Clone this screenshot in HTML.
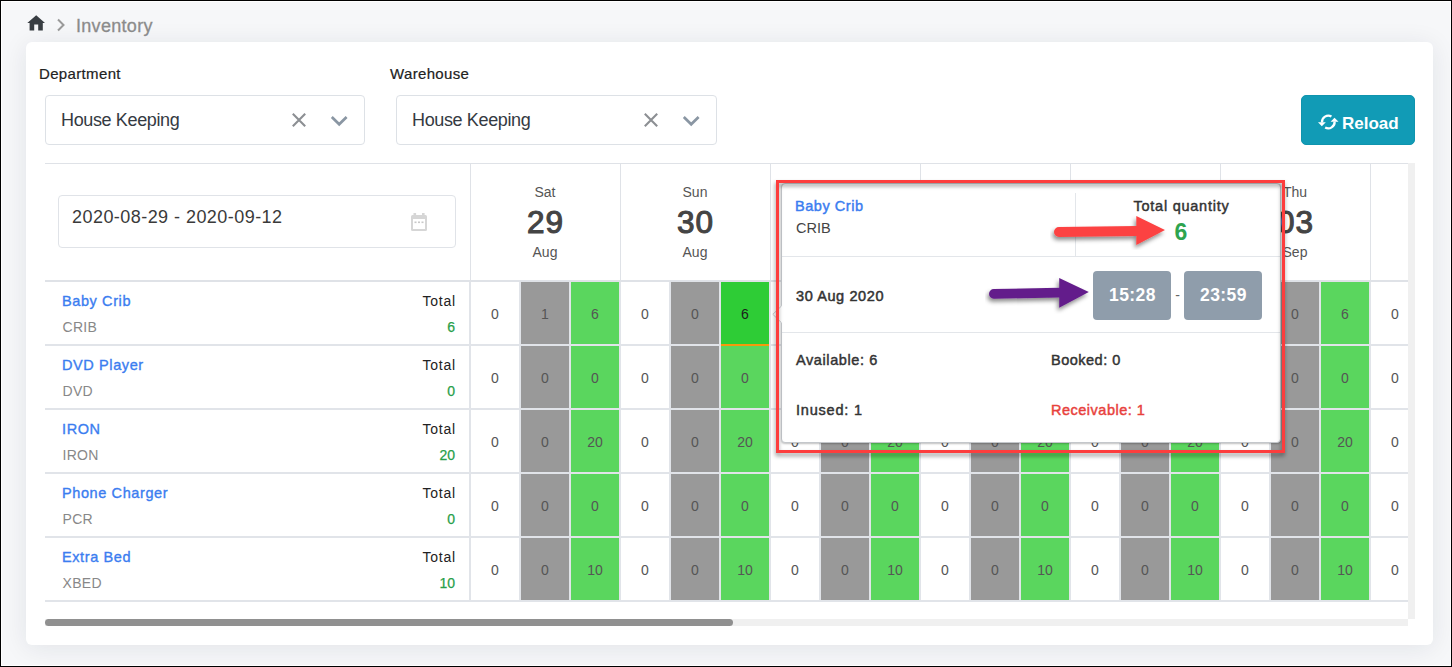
<!DOCTYPE html>
<html><head><meta charset="utf-8"><title>Inventory</title>
<style>
html,body{margin:0;padding:0;}
body{width:1452px;height:667px;position:relative;overflow:hidden;background:#f6f7f9;font-family:"Liberation Sans", sans-serif;}
.t{position:absolute;white-space:nowrap;}
</style></head><body>
<svg style="position:absolute;left:27px;top:15px" width="18" height="16" viewBox="0 0 18 16">
<path d="M9.2 0.3 L18.1 8 L15.8 8 L15.8 15.5 L11.2 15.5 L11.2 9.6 L7.2 9.6 L7.2 15.5 L2.6 15.5 L2.6 8 L0.3 8 Z" fill="#393e43"/></svg>
<svg style="position:absolute;left:56px;top:18px" width="10" height="14" viewBox="0 0 10 14">
<path d="M2 1.5 L7.5 7 L2 12.5" fill="none" stroke="#9a9a9a" stroke-width="2"/></svg>
<div class="t" style="left:76px;top:16.76px;font-size:18px;line-height:18px;color:#8c8c8c;font-weight:normal;-webkit-text-stroke:0.3px #8c8c8c;letter-spacing:0.3px;">Inventory</div>
<div style="position:absolute;left:26px;top:42px;width:1407px;height:603px;background:#fff;border-radius:6px;box-shadow:0 3px 26px rgba(20,30,50,0.09)"></div>
<div class="t" style="left:39px;top:66.30px;font-size:15px;line-height:15px;color:#222;font-weight:normal;-webkit-text-stroke:0.2px #222;letter-spacing:0.35px;">Department</div>
<div class="t" style="left:390px;top:66.30px;font-size:15px;line-height:15px;color:#222;font-weight:normal;-webkit-text-stroke:0.2px #222;letter-spacing:0.35px;">Warehouse</div>
<div style="position:absolute;left:45px;top:95px;width:318px;height:48px;border:1px solid #dde1e6;border-radius:4px;background:#fff"></div>
<div class="t" style="left:61px;top:111.16px;font-size:18px;line-height:18px;color:#343a42;font-weight:normal;letter-spacing:-0.36px;">House Keeping</div>
<svg style="position:absolute;left:291px;top:112px" width="16" height="16" viewBox="0 0 16 16">
<path d="M1.8 1.8 L14.2 14.2 M14.2 1.8 L1.8 14.2" stroke="#8c8f93" stroke-width="2.1" fill="none"/></svg>
<svg style="position:absolute;left:330px;top:114px" width="18" height="14" viewBox="0 0 18 14">
<path d="M1.8 3 L9.2 10.3 L16.6 3" stroke="#8a96a3" stroke-width="2.7" fill="none"/></svg>
<div style="position:absolute;left:396px;top:95px;width:319px;height:48px;border:1px solid #dde1e6;border-radius:4px;background:#fff"></div>
<div class="t" style="left:412px;top:111.16px;font-size:18px;line-height:18px;color:#343a42;font-weight:normal;letter-spacing:-0.36px;">House Keeping</div>
<svg style="position:absolute;left:643px;top:112px" width="16" height="16" viewBox="0 0 16 16">
<path d="M1.8 1.8 L14.2 14.2 M14.2 1.8 L1.8 14.2" stroke="#8c8f93" stroke-width="2.1" fill="none"/></svg>
<svg style="position:absolute;left:682px;top:114px" width="18" height="14" viewBox="0 0 18 14">
<path d="M1.8 3 L9.2 10.3 L16.6 3" stroke="#8a96a3" stroke-width="2.7" fill="none"/></svg>
<div style="position:absolute;left:1301px;top:95px;width:112px;height:48px;background:#119bb6;border:1px solid #0f94ae;border-radius:5px"></div>
<svg style="position:absolute;left:1314px;top:110px" width="28" height="24" viewBox="0 0 28 24">
<path d="M17.45 6.54 A6.3 6.3 0 0 0 8 12.4" stroke="#fff" stroke-width="2.3" fill="none"/>
<path d="M11.15 17.46 A6.3 6.3 0 0 0 20.6 11.6" stroke="#fff" stroke-width="2.3" fill="none"/>
<path d="M4 12.3 L11.8 12.3 L7.8 16.2 Z" fill="#fff"/>
<path d="M16.6 11.7 L24.5 11.7 L20.5 7.8 Z" fill="#fff"/>
</svg>
<div class="t" style="left:1342px;top:114.61px;font-size:17px;line-height:17px;color:#fff;font-weight:bold;">Reload</div>
<div style="position:absolute;left:0;top:0;width:1408px;height:619px;overflow:hidden">
<div style="position:absolute;left:45px;top:163px;width:1363px;height:1px;background:#dfe2e7"></div>
<div style="position:absolute;left:45px;top:280px;width:1363px;height:2px;background:#dfe2e7"></div>
<div style="position:absolute;left:470px;top:164px;width:1px;height:116px;background:#dfe2e7"></div>
<div style="position:absolute;left:620px;top:164px;width:1px;height:116px;background:#dfe2e7"></div>
<div style="position:absolute;left:770px;top:164px;width:1px;height:116px;background:#dfe2e7"></div>
<div style="position:absolute;left:920px;top:164px;width:1px;height:116px;background:#dfe2e7"></div>
<div style="position:absolute;left:1070px;top:164px;width:1px;height:116px;background:#dfe2e7"></div>
<div style="position:absolute;left:1220px;top:164px;width:1px;height:116px;background:#dfe2e7"></div>
<div style="position:absolute;left:1370px;top:164px;width:1px;height:116px;background:#dfe2e7"></div>
<div style="position:absolute;left:58px;top:195px;width:396px;height:51px;border:1px solid #e0e3e8;border-radius:4px"></div>
<div class="t" style="left:72px;top:208.26px;font-size:18px;line-height:18px;color:#3a3a3a;font-weight:normal;letter-spacing:0.45px;">2020-08-29 - 2020-09-12</div>
<svg style="position:absolute;left:410px;top:212px" width="18" height="20" viewBox="0 0 18 20">
<rect x="1" y="3" width="16" height="16" rx="1.5" fill="#d6d6d6"/>
<rect x="3" y="7" width="12" height="10" fill="#fff"/>
<rect x="3.5" y="1" width="2.6" height="3" fill="#d6d6d6"/><rect x="12" y="1" width="2.6" height="3" fill="#d6d6d6"/>
<rect x="4.5" y="9.5" width="2" height="1.6" fill="#c8c8c8"/><rect x="8" y="9.5" width="2" height="1.6" fill="#c8c8c8"/><rect x="11.5" y="9.5" width="2" height="1.6" fill="#c8c8c8"/>
</svg>
<div class="t" style="left:345px;width:400px;text-align:center;top:185.15px;font-size:14px;line-height:14px;color:#555;font-weight:normal;">Sat</div>
<div class="t" style="left:345px;width:400px;text-align:center;top:206.94px;font-size:31.5px;line-height:31.5px;color:#444;font-weight:normal;-webkit-text-stroke:1.1px #444;letter-spacing:1px;text-indent:1px;">29</div>
<div class="t" style="left:345px;width:400px;text-align:center;top:245.15px;font-size:14px;line-height:14px;color:#555;font-weight:normal;">Aug</div>
<div class="t" style="left:495px;width:400px;text-align:center;top:185.15px;font-size:14px;line-height:14px;color:#555;font-weight:normal;">Sun</div>
<div class="t" style="left:495px;width:400px;text-align:center;top:206.94px;font-size:31.5px;line-height:31.5px;color:#444;font-weight:normal;-webkit-text-stroke:1.1px #444;letter-spacing:1px;text-indent:1px;">30</div>
<div class="t" style="left:495px;width:400px;text-align:center;top:245.15px;font-size:14px;line-height:14px;color:#555;font-weight:normal;">Aug</div>
<div class="t" style="left:645px;width:400px;text-align:center;top:185.15px;font-size:14px;line-height:14px;color:#555;font-weight:normal;">Mon</div>
<div class="t" style="left:645px;width:400px;text-align:center;top:206.94px;font-size:31.5px;line-height:31.5px;color:#444;font-weight:normal;-webkit-text-stroke:1.1px #444;letter-spacing:1px;text-indent:1px;">31</div>
<div class="t" style="left:645px;width:400px;text-align:center;top:245.15px;font-size:14px;line-height:14px;color:#555;font-weight:normal;">Aug</div>
<div class="t" style="left:795px;width:400px;text-align:center;top:185.15px;font-size:14px;line-height:14px;color:#555;font-weight:normal;">Tue</div>
<div class="t" style="left:795px;width:400px;text-align:center;top:206.94px;font-size:31.5px;line-height:31.5px;color:#444;font-weight:normal;-webkit-text-stroke:1.1px #444;letter-spacing:1px;text-indent:1px;">01</div>
<div class="t" style="left:795px;width:400px;text-align:center;top:245.15px;font-size:14px;line-height:14px;color:#555;font-weight:normal;">Sep</div>
<div class="t" style="left:945px;width:400px;text-align:center;top:185.15px;font-size:14px;line-height:14px;color:#555;font-weight:normal;">Wed</div>
<div class="t" style="left:945px;width:400px;text-align:center;top:206.94px;font-size:31.5px;line-height:31.5px;color:#444;font-weight:normal;-webkit-text-stroke:1.1px #444;letter-spacing:1px;text-indent:1px;">02</div>
<div class="t" style="left:945px;width:400px;text-align:center;top:245.15px;font-size:14px;line-height:14px;color:#555;font-weight:normal;">Sep</div>
<div class="t" style="left:1095px;width:400px;text-align:center;top:185.15px;font-size:14px;line-height:14px;color:#555;font-weight:normal;">Thu</div>
<div class="t" style="left:1095px;width:400px;text-align:center;top:206.94px;font-size:31.5px;line-height:31.5px;color:#444;font-weight:normal;-webkit-text-stroke:1.1px #444;letter-spacing:1px;text-indent:1px;">03</div>
<div class="t" style="left:1095px;width:400px;text-align:center;top:245.15px;font-size:14px;line-height:14px;color:#555;font-weight:normal;">Sep</div>
<div class="t" style="left:1245px;width:400px;text-align:center;top:185.15px;font-size:14px;line-height:14px;color:#555;font-weight:normal;">Fri</div>
<div class="t" style="left:1245px;width:400px;text-align:center;top:206.94px;font-size:31.5px;line-height:31.5px;color:#444;font-weight:normal;-webkit-text-stroke:1.1px #444;letter-spacing:1px;text-indent:1px;">04</div>
<div class="t" style="left:1245px;width:400px;text-align:center;top:245.15px;font-size:14px;line-height:14px;color:#555;font-weight:normal;">Sep</div>
<div style="position:absolute;left:45px;top:344px;width:1363px;height:2px;background:#e1e4e9"></div>
<div class="t" style="left:62px;top:293.73px;font-size:14.5px;line-height:14.5px;color:#3b7df0;font-weight:normal;-webkit-text-stroke:0.35px #3b7df0;letter-spacing:0.6px;">Baby Crib</div>
<div class="t" style="left:62.5px;top:320.15px;font-size:14px;line-height:14px;color:#888;font-weight:normal;letter-spacing:0.3px;">CRIB</div>
<div class="t" style="left:56px;width:400px;text-align:right;top:294.15px;font-size:14px;line-height:14px;color:#222;font-weight:normal;letter-spacing:0.8px;margin-right:-0.8px;">Total</div>
<div style="position:absolute;left:469px;top:282px;width:1px;height:64px;background:#e1e4e9"></div>
<div class="t" style="left:55px;width:400px;text-align:right;top:320.15px;font-size:14px;line-height:14px;color:#28a04a;font-weight:normal;-webkit-text-stroke:0.25px #28a04a;">6</div>
<div style="position:absolute;left:471px;top:282px;width:48px;height:62px;background:#fff"></div>
<div style="position:absolute;left:470px;top:282px;width:1px;height:62px;background:#e1e4e9"></div>
<div class="t" style="left:295px;width:400px;text-align:center;top:307.15px;font-size:14px;line-height:14px;color:#555;font-weight:normal;">0</div>
<div style="position:absolute;left:521px;top:282px;width:48px;height:62px;background:#999999"></div>
<div style="position:absolute;left:520px;top:282px;width:1px;height:62px;background:#e1e4e9"></div>
<div style="position:absolute;left:519px;top:282px;width:1px;height:62px;background:#e1e4e9"></div>
<div class="t" style="left:345px;width:400px;text-align:center;top:307.15px;font-size:14px;line-height:14px;color:#555;font-weight:normal;">1</div>
<div style="position:absolute;left:571px;top:282px;width:48px;height:62px;background:#5ad65e"></div>
<div style="position:absolute;left:570px;top:282px;width:1px;height:62px;background:#e1e4e9"></div>
<div style="position:absolute;left:569px;top:282px;width:1px;height:62px;background:#e1e4e9"></div>
<div class="t" style="left:395px;width:400px;text-align:center;top:307.15px;font-size:14px;line-height:14px;color:#555;font-weight:normal;">6</div>
<div style="position:absolute;left:621px;top:282px;width:48px;height:62px;background:#fff"></div>
<div style="position:absolute;left:620px;top:282px;width:1px;height:62px;background:#e1e4e9"></div>
<div style="position:absolute;left:619px;top:282px;width:1px;height:62px;background:#e1e4e9"></div>
<div class="t" style="left:445px;width:400px;text-align:center;top:307.15px;font-size:14px;line-height:14px;color:#555;font-weight:normal;">0</div>
<div style="position:absolute;left:671px;top:282px;width:48px;height:62px;background:#999999"></div>
<div style="position:absolute;left:670px;top:282px;width:1px;height:62px;background:#e1e4e9"></div>
<div style="position:absolute;left:669px;top:282px;width:1px;height:62px;background:#e1e4e9"></div>
<div class="t" style="left:495px;width:400px;text-align:center;top:307.15px;font-size:14px;line-height:14px;color:#555;font-weight:normal;">0</div>
<div style="position:absolute;left:721px;top:282px;width:48px;height:62px;background:#2ecc36"></div>
<div style="position:absolute;left:720px;top:282px;width:1px;height:62px;background:#e1e4e9"></div>
<div style="position:absolute;left:719px;top:282px;width:1px;height:62px;background:#e1e4e9"></div>
<div class="t" style="left:545px;width:400px;text-align:center;top:307.15px;font-size:14px;line-height:14px;color:#1c1c1c;font-weight:normal;">6</div>
<div style="position:absolute;left:771px;top:282px;width:48px;height:62px;background:#fff"></div>
<div style="position:absolute;left:770px;top:282px;width:1px;height:62px;background:#e1e4e9"></div>
<div style="position:absolute;left:769px;top:282px;width:1px;height:62px;background:#e1e4e9"></div>
<div class="t" style="left:595px;width:400px;text-align:center;top:307.15px;font-size:14px;line-height:14px;color:#555;font-weight:normal;">0</div>
<div style="position:absolute;left:821px;top:282px;width:48px;height:62px;background:#999999"></div>
<div style="position:absolute;left:820px;top:282px;width:1px;height:62px;background:#e1e4e9"></div>
<div style="position:absolute;left:819px;top:282px;width:1px;height:62px;background:#e1e4e9"></div>
<div class="t" style="left:645px;width:400px;text-align:center;top:307.15px;font-size:14px;line-height:14px;color:#555;font-weight:normal;">0</div>
<div style="position:absolute;left:871px;top:282px;width:48px;height:62px;background:#5ad65e"></div>
<div style="position:absolute;left:870px;top:282px;width:1px;height:62px;background:#e1e4e9"></div>
<div style="position:absolute;left:869px;top:282px;width:1px;height:62px;background:#e1e4e9"></div>
<div class="t" style="left:695px;width:400px;text-align:center;top:307.15px;font-size:14px;line-height:14px;color:#555;font-weight:normal;">6</div>
<div style="position:absolute;left:921px;top:282px;width:48px;height:62px;background:#fff"></div>
<div style="position:absolute;left:920px;top:282px;width:1px;height:62px;background:#e1e4e9"></div>
<div style="position:absolute;left:919px;top:282px;width:1px;height:62px;background:#e1e4e9"></div>
<div class="t" style="left:745px;width:400px;text-align:center;top:307.15px;font-size:14px;line-height:14px;color:#555;font-weight:normal;">0</div>
<div style="position:absolute;left:971px;top:282px;width:48px;height:62px;background:#999999"></div>
<div style="position:absolute;left:970px;top:282px;width:1px;height:62px;background:#e1e4e9"></div>
<div style="position:absolute;left:969px;top:282px;width:1px;height:62px;background:#e1e4e9"></div>
<div class="t" style="left:795px;width:400px;text-align:center;top:307.15px;font-size:14px;line-height:14px;color:#555;font-weight:normal;">0</div>
<div style="position:absolute;left:1021px;top:282px;width:48px;height:62px;background:#5ad65e"></div>
<div style="position:absolute;left:1020px;top:282px;width:1px;height:62px;background:#e1e4e9"></div>
<div style="position:absolute;left:1019px;top:282px;width:1px;height:62px;background:#e1e4e9"></div>
<div class="t" style="left:845px;width:400px;text-align:center;top:307.15px;font-size:14px;line-height:14px;color:#555;font-weight:normal;">6</div>
<div style="position:absolute;left:1071px;top:282px;width:48px;height:62px;background:#fff"></div>
<div style="position:absolute;left:1070px;top:282px;width:1px;height:62px;background:#e1e4e9"></div>
<div style="position:absolute;left:1069px;top:282px;width:1px;height:62px;background:#e1e4e9"></div>
<div class="t" style="left:895px;width:400px;text-align:center;top:307.15px;font-size:14px;line-height:14px;color:#555;font-weight:normal;">0</div>
<div style="position:absolute;left:1121px;top:282px;width:48px;height:62px;background:#999999"></div>
<div style="position:absolute;left:1120px;top:282px;width:1px;height:62px;background:#e1e4e9"></div>
<div style="position:absolute;left:1119px;top:282px;width:1px;height:62px;background:#e1e4e9"></div>
<div class="t" style="left:945px;width:400px;text-align:center;top:307.15px;font-size:14px;line-height:14px;color:#555;font-weight:normal;">0</div>
<div style="position:absolute;left:1171px;top:282px;width:48px;height:62px;background:#5ad65e"></div>
<div style="position:absolute;left:1170px;top:282px;width:1px;height:62px;background:#e1e4e9"></div>
<div style="position:absolute;left:1169px;top:282px;width:1px;height:62px;background:#e1e4e9"></div>
<div class="t" style="left:995px;width:400px;text-align:center;top:307.15px;font-size:14px;line-height:14px;color:#555;font-weight:normal;">6</div>
<div style="position:absolute;left:1221px;top:282px;width:48px;height:62px;background:#fff"></div>
<div style="position:absolute;left:1220px;top:282px;width:1px;height:62px;background:#e1e4e9"></div>
<div style="position:absolute;left:1219px;top:282px;width:1px;height:62px;background:#e1e4e9"></div>
<div class="t" style="left:1045px;width:400px;text-align:center;top:307.15px;font-size:14px;line-height:14px;color:#555;font-weight:normal;">0</div>
<div style="position:absolute;left:1271px;top:282px;width:48px;height:62px;background:#999999"></div>
<div style="position:absolute;left:1270px;top:282px;width:1px;height:62px;background:#e1e4e9"></div>
<div style="position:absolute;left:1269px;top:282px;width:1px;height:62px;background:#e1e4e9"></div>
<div class="t" style="left:1095px;width:400px;text-align:center;top:307.15px;font-size:14px;line-height:14px;color:#555;font-weight:normal;">0</div>
<div style="position:absolute;left:1321px;top:282px;width:48px;height:62px;background:#5ad65e"></div>
<div style="position:absolute;left:1320px;top:282px;width:1px;height:62px;background:#e1e4e9"></div>
<div style="position:absolute;left:1319px;top:282px;width:1px;height:62px;background:#e1e4e9"></div>
<div class="t" style="left:1145px;width:400px;text-align:center;top:307.15px;font-size:14px;line-height:14px;color:#555;font-weight:normal;">6</div>
<div style="position:absolute;left:1371px;top:282px;width:48px;height:62px;background:#fff"></div>
<div style="position:absolute;left:1370px;top:282px;width:1px;height:62px;background:#e1e4e9"></div>
<div style="position:absolute;left:1369px;top:282px;width:1px;height:62px;background:#e1e4e9"></div>
<div class="t" style="left:1195px;width:400px;text-align:center;top:307.15px;font-size:14px;line-height:14px;color:#555;font-weight:normal;">0</div>
<div style="position:absolute;left:1421px;top:282px;width:48px;height:62px;background:#999999"></div>
<div style="position:absolute;left:1420px;top:282px;width:1px;height:62px;background:#e1e4e9"></div>
<div style="position:absolute;left:1419px;top:282px;width:1px;height:62px;background:#e1e4e9"></div>
<div class="t" style="left:1245px;width:400px;text-align:center;top:307.15px;font-size:14px;line-height:14px;color:#555;font-weight:normal;">0</div>
<div style="position:absolute;left:1471px;top:282px;width:48px;height:62px;background:#5ad65e"></div>
<div style="position:absolute;left:1470px;top:282px;width:1px;height:62px;background:#e1e4e9"></div>
<div style="position:absolute;left:1469px;top:282px;width:1px;height:62px;background:#e1e4e9"></div>
<div class="t" style="left:1295px;width:400px;text-align:center;top:307.15px;font-size:14px;line-height:14px;color:#555;font-weight:normal;">6</div>
<div style="position:absolute;left:45px;top:408px;width:1363px;height:2px;background:#e1e4e9"></div>
<div class="t" style="left:62px;top:357.73px;font-size:14.5px;line-height:14.5px;color:#3b7df0;font-weight:normal;-webkit-text-stroke:0.35px #3b7df0;letter-spacing:0.6px;">DVD Player</div>
<div class="t" style="left:62.5px;top:384.15px;font-size:14px;line-height:14px;color:#888;font-weight:normal;letter-spacing:0.3px;">DVD</div>
<div class="t" style="left:56px;width:400px;text-align:right;top:358.15px;font-size:14px;line-height:14px;color:#222;font-weight:normal;letter-spacing:0.8px;margin-right:-0.8px;">Total</div>
<div style="position:absolute;left:469px;top:346px;width:1px;height:64px;background:#e1e4e9"></div>
<div class="t" style="left:55px;width:400px;text-align:right;top:384.15px;font-size:14px;line-height:14px;color:#28a04a;font-weight:normal;-webkit-text-stroke:0.25px #28a04a;">0</div>
<div style="position:absolute;left:471px;top:346px;width:48px;height:62px;background:#fff"></div>
<div style="position:absolute;left:470px;top:346px;width:1px;height:62px;background:#e1e4e9"></div>
<div class="t" style="left:295px;width:400px;text-align:center;top:371.15px;font-size:14px;line-height:14px;color:#555;font-weight:normal;">0</div>
<div style="position:absolute;left:521px;top:346px;width:48px;height:62px;background:#999999"></div>
<div style="position:absolute;left:520px;top:346px;width:1px;height:62px;background:#e1e4e9"></div>
<div style="position:absolute;left:519px;top:346px;width:1px;height:62px;background:#e1e4e9"></div>
<div class="t" style="left:345px;width:400px;text-align:center;top:371.15px;font-size:14px;line-height:14px;color:#555;font-weight:normal;">0</div>
<div style="position:absolute;left:571px;top:346px;width:48px;height:62px;background:#5ad65e"></div>
<div style="position:absolute;left:570px;top:346px;width:1px;height:62px;background:#e1e4e9"></div>
<div style="position:absolute;left:569px;top:346px;width:1px;height:62px;background:#e1e4e9"></div>
<div class="t" style="left:395px;width:400px;text-align:center;top:371.15px;font-size:14px;line-height:14px;color:#555;font-weight:normal;">0</div>
<div style="position:absolute;left:621px;top:346px;width:48px;height:62px;background:#fff"></div>
<div style="position:absolute;left:620px;top:346px;width:1px;height:62px;background:#e1e4e9"></div>
<div style="position:absolute;left:619px;top:346px;width:1px;height:62px;background:#e1e4e9"></div>
<div class="t" style="left:445px;width:400px;text-align:center;top:371.15px;font-size:14px;line-height:14px;color:#555;font-weight:normal;">0</div>
<div style="position:absolute;left:671px;top:346px;width:48px;height:62px;background:#999999"></div>
<div style="position:absolute;left:670px;top:346px;width:1px;height:62px;background:#e1e4e9"></div>
<div style="position:absolute;left:669px;top:346px;width:1px;height:62px;background:#e1e4e9"></div>
<div class="t" style="left:495px;width:400px;text-align:center;top:371.15px;font-size:14px;line-height:14px;color:#555;font-weight:normal;">0</div>
<div style="position:absolute;left:721px;top:346px;width:48px;height:62px;background:#5ad65e"></div>
<div style="position:absolute;left:720px;top:346px;width:1px;height:62px;background:#e1e4e9"></div>
<div style="position:absolute;left:719px;top:346px;width:1px;height:62px;background:#e1e4e9"></div>
<div class="t" style="left:545px;width:400px;text-align:center;top:371.15px;font-size:14px;line-height:14px;color:#555;font-weight:normal;">0</div>
<div style="position:absolute;left:771px;top:346px;width:48px;height:62px;background:#fff"></div>
<div style="position:absolute;left:770px;top:346px;width:1px;height:62px;background:#e1e4e9"></div>
<div style="position:absolute;left:769px;top:346px;width:1px;height:62px;background:#e1e4e9"></div>
<div class="t" style="left:595px;width:400px;text-align:center;top:371.15px;font-size:14px;line-height:14px;color:#555;font-weight:normal;">0</div>
<div style="position:absolute;left:821px;top:346px;width:48px;height:62px;background:#999999"></div>
<div style="position:absolute;left:820px;top:346px;width:1px;height:62px;background:#e1e4e9"></div>
<div style="position:absolute;left:819px;top:346px;width:1px;height:62px;background:#e1e4e9"></div>
<div class="t" style="left:645px;width:400px;text-align:center;top:371.15px;font-size:14px;line-height:14px;color:#555;font-weight:normal;">0</div>
<div style="position:absolute;left:871px;top:346px;width:48px;height:62px;background:#5ad65e"></div>
<div style="position:absolute;left:870px;top:346px;width:1px;height:62px;background:#e1e4e9"></div>
<div style="position:absolute;left:869px;top:346px;width:1px;height:62px;background:#e1e4e9"></div>
<div class="t" style="left:695px;width:400px;text-align:center;top:371.15px;font-size:14px;line-height:14px;color:#555;font-weight:normal;">0</div>
<div style="position:absolute;left:921px;top:346px;width:48px;height:62px;background:#fff"></div>
<div style="position:absolute;left:920px;top:346px;width:1px;height:62px;background:#e1e4e9"></div>
<div style="position:absolute;left:919px;top:346px;width:1px;height:62px;background:#e1e4e9"></div>
<div class="t" style="left:745px;width:400px;text-align:center;top:371.15px;font-size:14px;line-height:14px;color:#555;font-weight:normal;">0</div>
<div style="position:absolute;left:971px;top:346px;width:48px;height:62px;background:#999999"></div>
<div style="position:absolute;left:970px;top:346px;width:1px;height:62px;background:#e1e4e9"></div>
<div style="position:absolute;left:969px;top:346px;width:1px;height:62px;background:#e1e4e9"></div>
<div class="t" style="left:795px;width:400px;text-align:center;top:371.15px;font-size:14px;line-height:14px;color:#555;font-weight:normal;">0</div>
<div style="position:absolute;left:1021px;top:346px;width:48px;height:62px;background:#5ad65e"></div>
<div style="position:absolute;left:1020px;top:346px;width:1px;height:62px;background:#e1e4e9"></div>
<div style="position:absolute;left:1019px;top:346px;width:1px;height:62px;background:#e1e4e9"></div>
<div class="t" style="left:845px;width:400px;text-align:center;top:371.15px;font-size:14px;line-height:14px;color:#555;font-weight:normal;">0</div>
<div style="position:absolute;left:1071px;top:346px;width:48px;height:62px;background:#fff"></div>
<div style="position:absolute;left:1070px;top:346px;width:1px;height:62px;background:#e1e4e9"></div>
<div style="position:absolute;left:1069px;top:346px;width:1px;height:62px;background:#e1e4e9"></div>
<div class="t" style="left:895px;width:400px;text-align:center;top:371.15px;font-size:14px;line-height:14px;color:#555;font-weight:normal;">0</div>
<div style="position:absolute;left:1121px;top:346px;width:48px;height:62px;background:#999999"></div>
<div style="position:absolute;left:1120px;top:346px;width:1px;height:62px;background:#e1e4e9"></div>
<div style="position:absolute;left:1119px;top:346px;width:1px;height:62px;background:#e1e4e9"></div>
<div class="t" style="left:945px;width:400px;text-align:center;top:371.15px;font-size:14px;line-height:14px;color:#555;font-weight:normal;">0</div>
<div style="position:absolute;left:1171px;top:346px;width:48px;height:62px;background:#5ad65e"></div>
<div style="position:absolute;left:1170px;top:346px;width:1px;height:62px;background:#e1e4e9"></div>
<div style="position:absolute;left:1169px;top:346px;width:1px;height:62px;background:#e1e4e9"></div>
<div class="t" style="left:995px;width:400px;text-align:center;top:371.15px;font-size:14px;line-height:14px;color:#555;font-weight:normal;">0</div>
<div style="position:absolute;left:1221px;top:346px;width:48px;height:62px;background:#fff"></div>
<div style="position:absolute;left:1220px;top:346px;width:1px;height:62px;background:#e1e4e9"></div>
<div style="position:absolute;left:1219px;top:346px;width:1px;height:62px;background:#e1e4e9"></div>
<div class="t" style="left:1045px;width:400px;text-align:center;top:371.15px;font-size:14px;line-height:14px;color:#555;font-weight:normal;">0</div>
<div style="position:absolute;left:1271px;top:346px;width:48px;height:62px;background:#999999"></div>
<div style="position:absolute;left:1270px;top:346px;width:1px;height:62px;background:#e1e4e9"></div>
<div style="position:absolute;left:1269px;top:346px;width:1px;height:62px;background:#e1e4e9"></div>
<div class="t" style="left:1095px;width:400px;text-align:center;top:371.15px;font-size:14px;line-height:14px;color:#555;font-weight:normal;">0</div>
<div style="position:absolute;left:1321px;top:346px;width:48px;height:62px;background:#5ad65e"></div>
<div style="position:absolute;left:1320px;top:346px;width:1px;height:62px;background:#e1e4e9"></div>
<div style="position:absolute;left:1319px;top:346px;width:1px;height:62px;background:#e1e4e9"></div>
<div class="t" style="left:1145px;width:400px;text-align:center;top:371.15px;font-size:14px;line-height:14px;color:#555;font-weight:normal;">0</div>
<div style="position:absolute;left:1371px;top:346px;width:48px;height:62px;background:#fff"></div>
<div style="position:absolute;left:1370px;top:346px;width:1px;height:62px;background:#e1e4e9"></div>
<div style="position:absolute;left:1369px;top:346px;width:1px;height:62px;background:#e1e4e9"></div>
<div class="t" style="left:1195px;width:400px;text-align:center;top:371.15px;font-size:14px;line-height:14px;color:#555;font-weight:normal;">0</div>
<div style="position:absolute;left:1421px;top:346px;width:48px;height:62px;background:#999999"></div>
<div style="position:absolute;left:1420px;top:346px;width:1px;height:62px;background:#e1e4e9"></div>
<div style="position:absolute;left:1419px;top:346px;width:1px;height:62px;background:#e1e4e9"></div>
<div class="t" style="left:1245px;width:400px;text-align:center;top:371.15px;font-size:14px;line-height:14px;color:#555;font-weight:normal;">0</div>
<div style="position:absolute;left:1471px;top:346px;width:48px;height:62px;background:#5ad65e"></div>
<div style="position:absolute;left:1470px;top:346px;width:1px;height:62px;background:#e1e4e9"></div>
<div style="position:absolute;left:1469px;top:346px;width:1px;height:62px;background:#e1e4e9"></div>
<div class="t" style="left:1295px;width:400px;text-align:center;top:371.15px;font-size:14px;line-height:14px;color:#555;font-weight:normal;">0</div>
<div style="position:absolute;left:45px;top:472px;width:1363px;height:2px;background:#e1e4e9"></div>
<div class="t" style="left:62px;top:421.73px;font-size:14.5px;line-height:14.5px;color:#3b7df0;font-weight:normal;-webkit-text-stroke:0.35px #3b7df0;letter-spacing:0.6px;">IRON</div>
<div class="t" style="left:62.5px;top:448.15px;font-size:14px;line-height:14px;color:#888;font-weight:normal;letter-spacing:0.3px;">IRON</div>
<div class="t" style="left:56px;width:400px;text-align:right;top:422.15px;font-size:14px;line-height:14px;color:#222;font-weight:normal;letter-spacing:0.8px;margin-right:-0.8px;">Total</div>
<div style="position:absolute;left:469px;top:410px;width:1px;height:64px;background:#e1e4e9"></div>
<div class="t" style="left:55px;width:400px;text-align:right;top:448.15px;font-size:14px;line-height:14px;color:#28a04a;font-weight:normal;-webkit-text-stroke:0.25px #28a04a;">20</div>
<div style="position:absolute;left:471px;top:410px;width:48px;height:62px;background:#fff"></div>
<div style="position:absolute;left:470px;top:410px;width:1px;height:62px;background:#e1e4e9"></div>
<div class="t" style="left:295px;width:400px;text-align:center;top:435.15px;font-size:14px;line-height:14px;color:#555;font-weight:normal;">0</div>
<div style="position:absolute;left:521px;top:410px;width:48px;height:62px;background:#999999"></div>
<div style="position:absolute;left:520px;top:410px;width:1px;height:62px;background:#e1e4e9"></div>
<div style="position:absolute;left:519px;top:410px;width:1px;height:62px;background:#e1e4e9"></div>
<div class="t" style="left:345px;width:400px;text-align:center;top:435.15px;font-size:14px;line-height:14px;color:#555;font-weight:normal;">0</div>
<div style="position:absolute;left:571px;top:410px;width:48px;height:62px;background:#5ad65e"></div>
<div style="position:absolute;left:570px;top:410px;width:1px;height:62px;background:#e1e4e9"></div>
<div style="position:absolute;left:569px;top:410px;width:1px;height:62px;background:#e1e4e9"></div>
<div class="t" style="left:395px;width:400px;text-align:center;top:435.15px;font-size:14px;line-height:14px;color:#555;font-weight:normal;">20</div>
<div style="position:absolute;left:621px;top:410px;width:48px;height:62px;background:#fff"></div>
<div style="position:absolute;left:620px;top:410px;width:1px;height:62px;background:#e1e4e9"></div>
<div style="position:absolute;left:619px;top:410px;width:1px;height:62px;background:#e1e4e9"></div>
<div class="t" style="left:445px;width:400px;text-align:center;top:435.15px;font-size:14px;line-height:14px;color:#555;font-weight:normal;">0</div>
<div style="position:absolute;left:671px;top:410px;width:48px;height:62px;background:#999999"></div>
<div style="position:absolute;left:670px;top:410px;width:1px;height:62px;background:#e1e4e9"></div>
<div style="position:absolute;left:669px;top:410px;width:1px;height:62px;background:#e1e4e9"></div>
<div class="t" style="left:495px;width:400px;text-align:center;top:435.15px;font-size:14px;line-height:14px;color:#555;font-weight:normal;">0</div>
<div style="position:absolute;left:721px;top:410px;width:48px;height:62px;background:#5ad65e"></div>
<div style="position:absolute;left:720px;top:410px;width:1px;height:62px;background:#e1e4e9"></div>
<div style="position:absolute;left:719px;top:410px;width:1px;height:62px;background:#e1e4e9"></div>
<div class="t" style="left:545px;width:400px;text-align:center;top:435.15px;font-size:14px;line-height:14px;color:#555;font-weight:normal;">20</div>
<div style="position:absolute;left:771px;top:410px;width:48px;height:62px;background:#fff"></div>
<div style="position:absolute;left:770px;top:410px;width:1px;height:62px;background:#e1e4e9"></div>
<div style="position:absolute;left:769px;top:410px;width:1px;height:62px;background:#e1e4e9"></div>
<div class="t" style="left:595px;width:400px;text-align:center;top:435.15px;font-size:14px;line-height:14px;color:#555;font-weight:normal;">0</div>
<div style="position:absolute;left:821px;top:410px;width:48px;height:62px;background:#999999"></div>
<div style="position:absolute;left:820px;top:410px;width:1px;height:62px;background:#e1e4e9"></div>
<div style="position:absolute;left:819px;top:410px;width:1px;height:62px;background:#e1e4e9"></div>
<div class="t" style="left:645px;width:400px;text-align:center;top:435.15px;font-size:14px;line-height:14px;color:#555;font-weight:normal;">0</div>
<div style="position:absolute;left:871px;top:410px;width:48px;height:62px;background:#5ad65e"></div>
<div style="position:absolute;left:870px;top:410px;width:1px;height:62px;background:#e1e4e9"></div>
<div style="position:absolute;left:869px;top:410px;width:1px;height:62px;background:#e1e4e9"></div>
<div class="t" style="left:695px;width:400px;text-align:center;top:435.15px;font-size:14px;line-height:14px;color:#555;font-weight:normal;">20</div>
<div style="position:absolute;left:921px;top:410px;width:48px;height:62px;background:#fff"></div>
<div style="position:absolute;left:920px;top:410px;width:1px;height:62px;background:#e1e4e9"></div>
<div style="position:absolute;left:919px;top:410px;width:1px;height:62px;background:#e1e4e9"></div>
<div class="t" style="left:745px;width:400px;text-align:center;top:435.15px;font-size:14px;line-height:14px;color:#555;font-weight:normal;">0</div>
<div style="position:absolute;left:971px;top:410px;width:48px;height:62px;background:#999999"></div>
<div style="position:absolute;left:970px;top:410px;width:1px;height:62px;background:#e1e4e9"></div>
<div style="position:absolute;left:969px;top:410px;width:1px;height:62px;background:#e1e4e9"></div>
<div class="t" style="left:795px;width:400px;text-align:center;top:435.15px;font-size:14px;line-height:14px;color:#555;font-weight:normal;">0</div>
<div style="position:absolute;left:1021px;top:410px;width:48px;height:62px;background:#5ad65e"></div>
<div style="position:absolute;left:1020px;top:410px;width:1px;height:62px;background:#e1e4e9"></div>
<div style="position:absolute;left:1019px;top:410px;width:1px;height:62px;background:#e1e4e9"></div>
<div class="t" style="left:845px;width:400px;text-align:center;top:435.15px;font-size:14px;line-height:14px;color:#555;font-weight:normal;">20</div>
<div style="position:absolute;left:1071px;top:410px;width:48px;height:62px;background:#fff"></div>
<div style="position:absolute;left:1070px;top:410px;width:1px;height:62px;background:#e1e4e9"></div>
<div style="position:absolute;left:1069px;top:410px;width:1px;height:62px;background:#e1e4e9"></div>
<div class="t" style="left:895px;width:400px;text-align:center;top:435.15px;font-size:14px;line-height:14px;color:#555;font-weight:normal;">0</div>
<div style="position:absolute;left:1121px;top:410px;width:48px;height:62px;background:#999999"></div>
<div style="position:absolute;left:1120px;top:410px;width:1px;height:62px;background:#e1e4e9"></div>
<div style="position:absolute;left:1119px;top:410px;width:1px;height:62px;background:#e1e4e9"></div>
<div class="t" style="left:945px;width:400px;text-align:center;top:435.15px;font-size:14px;line-height:14px;color:#555;font-weight:normal;">0</div>
<div style="position:absolute;left:1171px;top:410px;width:48px;height:62px;background:#5ad65e"></div>
<div style="position:absolute;left:1170px;top:410px;width:1px;height:62px;background:#e1e4e9"></div>
<div style="position:absolute;left:1169px;top:410px;width:1px;height:62px;background:#e1e4e9"></div>
<div class="t" style="left:995px;width:400px;text-align:center;top:435.15px;font-size:14px;line-height:14px;color:#555;font-weight:normal;">20</div>
<div style="position:absolute;left:1221px;top:410px;width:48px;height:62px;background:#fff"></div>
<div style="position:absolute;left:1220px;top:410px;width:1px;height:62px;background:#e1e4e9"></div>
<div style="position:absolute;left:1219px;top:410px;width:1px;height:62px;background:#e1e4e9"></div>
<div class="t" style="left:1045px;width:400px;text-align:center;top:435.15px;font-size:14px;line-height:14px;color:#555;font-weight:normal;">0</div>
<div style="position:absolute;left:1271px;top:410px;width:48px;height:62px;background:#999999"></div>
<div style="position:absolute;left:1270px;top:410px;width:1px;height:62px;background:#e1e4e9"></div>
<div style="position:absolute;left:1269px;top:410px;width:1px;height:62px;background:#e1e4e9"></div>
<div class="t" style="left:1095px;width:400px;text-align:center;top:435.15px;font-size:14px;line-height:14px;color:#555;font-weight:normal;">0</div>
<div style="position:absolute;left:1321px;top:410px;width:48px;height:62px;background:#5ad65e"></div>
<div style="position:absolute;left:1320px;top:410px;width:1px;height:62px;background:#e1e4e9"></div>
<div style="position:absolute;left:1319px;top:410px;width:1px;height:62px;background:#e1e4e9"></div>
<div class="t" style="left:1145px;width:400px;text-align:center;top:435.15px;font-size:14px;line-height:14px;color:#555;font-weight:normal;">20</div>
<div style="position:absolute;left:1371px;top:410px;width:48px;height:62px;background:#fff"></div>
<div style="position:absolute;left:1370px;top:410px;width:1px;height:62px;background:#e1e4e9"></div>
<div style="position:absolute;left:1369px;top:410px;width:1px;height:62px;background:#e1e4e9"></div>
<div class="t" style="left:1195px;width:400px;text-align:center;top:435.15px;font-size:14px;line-height:14px;color:#555;font-weight:normal;">0</div>
<div style="position:absolute;left:1421px;top:410px;width:48px;height:62px;background:#999999"></div>
<div style="position:absolute;left:1420px;top:410px;width:1px;height:62px;background:#e1e4e9"></div>
<div style="position:absolute;left:1419px;top:410px;width:1px;height:62px;background:#e1e4e9"></div>
<div class="t" style="left:1245px;width:400px;text-align:center;top:435.15px;font-size:14px;line-height:14px;color:#555;font-weight:normal;">0</div>
<div style="position:absolute;left:1471px;top:410px;width:48px;height:62px;background:#5ad65e"></div>
<div style="position:absolute;left:1470px;top:410px;width:1px;height:62px;background:#e1e4e9"></div>
<div style="position:absolute;left:1469px;top:410px;width:1px;height:62px;background:#e1e4e9"></div>
<div class="t" style="left:1295px;width:400px;text-align:center;top:435.15px;font-size:14px;line-height:14px;color:#555;font-weight:normal;">20</div>
<div style="position:absolute;left:45px;top:536px;width:1363px;height:2px;background:#e1e4e9"></div>
<div class="t" style="left:62px;top:485.73px;font-size:14.5px;line-height:14.5px;color:#3b7df0;font-weight:normal;-webkit-text-stroke:0.35px #3b7df0;letter-spacing:0.6px;">Phone Charger</div>
<div class="t" style="left:62.5px;top:512.15px;font-size:14px;line-height:14px;color:#888;font-weight:normal;letter-spacing:0.3px;">PCR</div>
<div class="t" style="left:56px;width:400px;text-align:right;top:486.15px;font-size:14px;line-height:14px;color:#222;font-weight:normal;letter-spacing:0.8px;margin-right:-0.8px;">Total</div>
<div style="position:absolute;left:469px;top:474px;width:1px;height:64px;background:#e1e4e9"></div>
<div class="t" style="left:55px;width:400px;text-align:right;top:512.15px;font-size:14px;line-height:14px;color:#28a04a;font-weight:normal;-webkit-text-stroke:0.25px #28a04a;">0</div>
<div style="position:absolute;left:471px;top:474px;width:48px;height:62px;background:#fff"></div>
<div style="position:absolute;left:470px;top:474px;width:1px;height:62px;background:#e1e4e9"></div>
<div class="t" style="left:295px;width:400px;text-align:center;top:499.15px;font-size:14px;line-height:14px;color:#555;font-weight:normal;">0</div>
<div style="position:absolute;left:521px;top:474px;width:48px;height:62px;background:#999999"></div>
<div style="position:absolute;left:520px;top:474px;width:1px;height:62px;background:#e1e4e9"></div>
<div style="position:absolute;left:519px;top:474px;width:1px;height:62px;background:#e1e4e9"></div>
<div class="t" style="left:345px;width:400px;text-align:center;top:499.15px;font-size:14px;line-height:14px;color:#555;font-weight:normal;">0</div>
<div style="position:absolute;left:571px;top:474px;width:48px;height:62px;background:#5ad65e"></div>
<div style="position:absolute;left:570px;top:474px;width:1px;height:62px;background:#e1e4e9"></div>
<div style="position:absolute;left:569px;top:474px;width:1px;height:62px;background:#e1e4e9"></div>
<div class="t" style="left:395px;width:400px;text-align:center;top:499.15px;font-size:14px;line-height:14px;color:#555;font-weight:normal;">0</div>
<div style="position:absolute;left:621px;top:474px;width:48px;height:62px;background:#fff"></div>
<div style="position:absolute;left:620px;top:474px;width:1px;height:62px;background:#e1e4e9"></div>
<div style="position:absolute;left:619px;top:474px;width:1px;height:62px;background:#e1e4e9"></div>
<div class="t" style="left:445px;width:400px;text-align:center;top:499.15px;font-size:14px;line-height:14px;color:#555;font-weight:normal;">0</div>
<div style="position:absolute;left:671px;top:474px;width:48px;height:62px;background:#999999"></div>
<div style="position:absolute;left:670px;top:474px;width:1px;height:62px;background:#e1e4e9"></div>
<div style="position:absolute;left:669px;top:474px;width:1px;height:62px;background:#e1e4e9"></div>
<div class="t" style="left:495px;width:400px;text-align:center;top:499.15px;font-size:14px;line-height:14px;color:#555;font-weight:normal;">0</div>
<div style="position:absolute;left:721px;top:474px;width:48px;height:62px;background:#5ad65e"></div>
<div style="position:absolute;left:720px;top:474px;width:1px;height:62px;background:#e1e4e9"></div>
<div style="position:absolute;left:719px;top:474px;width:1px;height:62px;background:#e1e4e9"></div>
<div class="t" style="left:545px;width:400px;text-align:center;top:499.15px;font-size:14px;line-height:14px;color:#555;font-weight:normal;">0</div>
<div style="position:absolute;left:771px;top:474px;width:48px;height:62px;background:#fff"></div>
<div style="position:absolute;left:770px;top:474px;width:1px;height:62px;background:#e1e4e9"></div>
<div style="position:absolute;left:769px;top:474px;width:1px;height:62px;background:#e1e4e9"></div>
<div class="t" style="left:595px;width:400px;text-align:center;top:499.15px;font-size:14px;line-height:14px;color:#555;font-weight:normal;">0</div>
<div style="position:absolute;left:821px;top:474px;width:48px;height:62px;background:#999999"></div>
<div style="position:absolute;left:820px;top:474px;width:1px;height:62px;background:#e1e4e9"></div>
<div style="position:absolute;left:819px;top:474px;width:1px;height:62px;background:#e1e4e9"></div>
<div class="t" style="left:645px;width:400px;text-align:center;top:499.15px;font-size:14px;line-height:14px;color:#555;font-weight:normal;">0</div>
<div style="position:absolute;left:871px;top:474px;width:48px;height:62px;background:#5ad65e"></div>
<div style="position:absolute;left:870px;top:474px;width:1px;height:62px;background:#e1e4e9"></div>
<div style="position:absolute;left:869px;top:474px;width:1px;height:62px;background:#e1e4e9"></div>
<div class="t" style="left:695px;width:400px;text-align:center;top:499.15px;font-size:14px;line-height:14px;color:#555;font-weight:normal;">0</div>
<div style="position:absolute;left:921px;top:474px;width:48px;height:62px;background:#fff"></div>
<div style="position:absolute;left:920px;top:474px;width:1px;height:62px;background:#e1e4e9"></div>
<div style="position:absolute;left:919px;top:474px;width:1px;height:62px;background:#e1e4e9"></div>
<div class="t" style="left:745px;width:400px;text-align:center;top:499.15px;font-size:14px;line-height:14px;color:#555;font-weight:normal;">0</div>
<div style="position:absolute;left:971px;top:474px;width:48px;height:62px;background:#999999"></div>
<div style="position:absolute;left:970px;top:474px;width:1px;height:62px;background:#e1e4e9"></div>
<div style="position:absolute;left:969px;top:474px;width:1px;height:62px;background:#e1e4e9"></div>
<div class="t" style="left:795px;width:400px;text-align:center;top:499.15px;font-size:14px;line-height:14px;color:#555;font-weight:normal;">0</div>
<div style="position:absolute;left:1021px;top:474px;width:48px;height:62px;background:#5ad65e"></div>
<div style="position:absolute;left:1020px;top:474px;width:1px;height:62px;background:#e1e4e9"></div>
<div style="position:absolute;left:1019px;top:474px;width:1px;height:62px;background:#e1e4e9"></div>
<div class="t" style="left:845px;width:400px;text-align:center;top:499.15px;font-size:14px;line-height:14px;color:#555;font-weight:normal;">0</div>
<div style="position:absolute;left:1071px;top:474px;width:48px;height:62px;background:#fff"></div>
<div style="position:absolute;left:1070px;top:474px;width:1px;height:62px;background:#e1e4e9"></div>
<div style="position:absolute;left:1069px;top:474px;width:1px;height:62px;background:#e1e4e9"></div>
<div class="t" style="left:895px;width:400px;text-align:center;top:499.15px;font-size:14px;line-height:14px;color:#555;font-weight:normal;">0</div>
<div style="position:absolute;left:1121px;top:474px;width:48px;height:62px;background:#999999"></div>
<div style="position:absolute;left:1120px;top:474px;width:1px;height:62px;background:#e1e4e9"></div>
<div style="position:absolute;left:1119px;top:474px;width:1px;height:62px;background:#e1e4e9"></div>
<div class="t" style="left:945px;width:400px;text-align:center;top:499.15px;font-size:14px;line-height:14px;color:#555;font-weight:normal;">0</div>
<div style="position:absolute;left:1171px;top:474px;width:48px;height:62px;background:#5ad65e"></div>
<div style="position:absolute;left:1170px;top:474px;width:1px;height:62px;background:#e1e4e9"></div>
<div style="position:absolute;left:1169px;top:474px;width:1px;height:62px;background:#e1e4e9"></div>
<div class="t" style="left:995px;width:400px;text-align:center;top:499.15px;font-size:14px;line-height:14px;color:#555;font-weight:normal;">0</div>
<div style="position:absolute;left:1221px;top:474px;width:48px;height:62px;background:#fff"></div>
<div style="position:absolute;left:1220px;top:474px;width:1px;height:62px;background:#e1e4e9"></div>
<div style="position:absolute;left:1219px;top:474px;width:1px;height:62px;background:#e1e4e9"></div>
<div class="t" style="left:1045px;width:400px;text-align:center;top:499.15px;font-size:14px;line-height:14px;color:#555;font-weight:normal;">0</div>
<div style="position:absolute;left:1271px;top:474px;width:48px;height:62px;background:#999999"></div>
<div style="position:absolute;left:1270px;top:474px;width:1px;height:62px;background:#e1e4e9"></div>
<div style="position:absolute;left:1269px;top:474px;width:1px;height:62px;background:#e1e4e9"></div>
<div class="t" style="left:1095px;width:400px;text-align:center;top:499.15px;font-size:14px;line-height:14px;color:#555;font-weight:normal;">0</div>
<div style="position:absolute;left:1321px;top:474px;width:48px;height:62px;background:#5ad65e"></div>
<div style="position:absolute;left:1320px;top:474px;width:1px;height:62px;background:#e1e4e9"></div>
<div style="position:absolute;left:1319px;top:474px;width:1px;height:62px;background:#e1e4e9"></div>
<div class="t" style="left:1145px;width:400px;text-align:center;top:499.15px;font-size:14px;line-height:14px;color:#555;font-weight:normal;">0</div>
<div style="position:absolute;left:1371px;top:474px;width:48px;height:62px;background:#fff"></div>
<div style="position:absolute;left:1370px;top:474px;width:1px;height:62px;background:#e1e4e9"></div>
<div style="position:absolute;left:1369px;top:474px;width:1px;height:62px;background:#e1e4e9"></div>
<div class="t" style="left:1195px;width:400px;text-align:center;top:499.15px;font-size:14px;line-height:14px;color:#555;font-weight:normal;">0</div>
<div style="position:absolute;left:1421px;top:474px;width:48px;height:62px;background:#999999"></div>
<div style="position:absolute;left:1420px;top:474px;width:1px;height:62px;background:#e1e4e9"></div>
<div style="position:absolute;left:1419px;top:474px;width:1px;height:62px;background:#e1e4e9"></div>
<div class="t" style="left:1245px;width:400px;text-align:center;top:499.15px;font-size:14px;line-height:14px;color:#555;font-weight:normal;">0</div>
<div style="position:absolute;left:1471px;top:474px;width:48px;height:62px;background:#5ad65e"></div>
<div style="position:absolute;left:1470px;top:474px;width:1px;height:62px;background:#e1e4e9"></div>
<div style="position:absolute;left:1469px;top:474px;width:1px;height:62px;background:#e1e4e9"></div>
<div class="t" style="left:1295px;width:400px;text-align:center;top:499.15px;font-size:14px;line-height:14px;color:#555;font-weight:normal;">0</div>
<div style="position:absolute;left:45px;top:600px;width:1363px;height:2px;background:#e1e4e9"></div>
<div class="t" style="left:62px;top:549.73px;font-size:14.5px;line-height:14.5px;color:#3b7df0;font-weight:normal;-webkit-text-stroke:0.35px #3b7df0;letter-spacing:0.6px;">Extra Bed</div>
<div class="t" style="left:62.5px;top:576.15px;font-size:14px;line-height:14px;color:#888;font-weight:normal;letter-spacing:0.3px;">XBED</div>
<div class="t" style="left:56px;width:400px;text-align:right;top:550.15px;font-size:14px;line-height:14px;color:#222;font-weight:normal;letter-spacing:0.8px;margin-right:-0.8px;">Total</div>
<div style="position:absolute;left:469px;top:538px;width:1px;height:64px;background:#e1e4e9"></div>
<div class="t" style="left:55px;width:400px;text-align:right;top:576.15px;font-size:14px;line-height:14px;color:#28a04a;font-weight:normal;-webkit-text-stroke:0.25px #28a04a;">10</div>
<div style="position:absolute;left:471px;top:538px;width:48px;height:62px;background:#fff"></div>
<div style="position:absolute;left:470px;top:538px;width:1px;height:62px;background:#e1e4e9"></div>
<div class="t" style="left:295px;width:400px;text-align:center;top:563.15px;font-size:14px;line-height:14px;color:#555;font-weight:normal;">0</div>
<div style="position:absolute;left:521px;top:538px;width:48px;height:62px;background:#999999"></div>
<div style="position:absolute;left:520px;top:538px;width:1px;height:62px;background:#e1e4e9"></div>
<div style="position:absolute;left:519px;top:538px;width:1px;height:62px;background:#e1e4e9"></div>
<div class="t" style="left:345px;width:400px;text-align:center;top:563.15px;font-size:14px;line-height:14px;color:#555;font-weight:normal;">0</div>
<div style="position:absolute;left:571px;top:538px;width:48px;height:62px;background:#5ad65e"></div>
<div style="position:absolute;left:570px;top:538px;width:1px;height:62px;background:#e1e4e9"></div>
<div style="position:absolute;left:569px;top:538px;width:1px;height:62px;background:#e1e4e9"></div>
<div class="t" style="left:395px;width:400px;text-align:center;top:563.15px;font-size:14px;line-height:14px;color:#555;font-weight:normal;">10</div>
<div style="position:absolute;left:621px;top:538px;width:48px;height:62px;background:#fff"></div>
<div style="position:absolute;left:620px;top:538px;width:1px;height:62px;background:#e1e4e9"></div>
<div style="position:absolute;left:619px;top:538px;width:1px;height:62px;background:#e1e4e9"></div>
<div class="t" style="left:445px;width:400px;text-align:center;top:563.15px;font-size:14px;line-height:14px;color:#555;font-weight:normal;">0</div>
<div style="position:absolute;left:671px;top:538px;width:48px;height:62px;background:#999999"></div>
<div style="position:absolute;left:670px;top:538px;width:1px;height:62px;background:#e1e4e9"></div>
<div style="position:absolute;left:669px;top:538px;width:1px;height:62px;background:#e1e4e9"></div>
<div class="t" style="left:495px;width:400px;text-align:center;top:563.15px;font-size:14px;line-height:14px;color:#555;font-weight:normal;">0</div>
<div style="position:absolute;left:721px;top:538px;width:48px;height:62px;background:#5ad65e"></div>
<div style="position:absolute;left:720px;top:538px;width:1px;height:62px;background:#e1e4e9"></div>
<div style="position:absolute;left:719px;top:538px;width:1px;height:62px;background:#e1e4e9"></div>
<div class="t" style="left:545px;width:400px;text-align:center;top:563.15px;font-size:14px;line-height:14px;color:#555;font-weight:normal;">10</div>
<div style="position:absolute;left:771px;top:538px;width:48px;height:62px;background:#fff"></div>
<div style="position:absolute;left:770px;top:538px;width:1px;height:62px;background:#e1e4e9"></div>
<div style="position:absolute;left:769px;top:538px;width:1px;height:62px;background:#e1e4e9"></div>
<div class="t" style="left:595px;width:400px;text-align:center;top:563.15px;font-size:14px;line-height:14px;color:#555;font-weight:normal;">0</div>
<div style="position:absolute;left:821px;top:538px;width:48px;height:62px;background:#999999"></div>
<div style="position:absolute;left:820px;top:538px;width:1px;height:62px;background:#e1e4e9"></div>
<div style="position:absolute;left:819px;top:538px;width:1px;height:62px;background:#e1e4e9"></div>
<div class="t" style="left:645px;width:400px;text-align:center;top:563.15px;font-size:14px;line-height:14px;color:#555;font-weight:normal;">0</div>
<div style="position:absolute;left:871px;top:538px;width:48px;height:62px;background:#5ad65e"></div>
<div style="position:absolute;left:870px;top:538px;width:1px;height:62px;background:#e1e4e9"></div>
<div style="position:absolute;left:869px;top:538px;width:1px;height:62px;background:#e1e4e9"></div>
<div class="t" style="left:695px;width:400px;text-align:center;top:563.15px;font-size:14px;line-height:14px;color:#555;font-weight:normal;">10</div>
<div style="position:absolute;left:921px;top:538px;width:48px;height:62px;background:#fff"></div>
<div style="position:absolute;left:920px;top:538px;width:1px;height:62px;background:#e1e4e9"></div>
<div style="position:absolute;left:919px;top:538px;width:1px;height:62px;background:#e1e4e9"></div>
<div class="t" style="left:745px;width:400px;text-align:center;top:563.15px;font-size:14px;line-height:14px;color:#555;font-weight:normal;">0</div>
<div style="position:absolute;left:971px;top:538px;width:48px;height:62px;background:#999999"></div>
<div style="position:absolute;left:970px;top:538px;width:1px;height:62px;background:#e1e4e9"></div>
<div style="position:absolute;left:969px;top:538px;width:1px;height:62px;background:#e1e4e9"></div>
<div class="t" style="left:795px;width:400px;text-align:center;top:563.15px;font-size:14px;line-height:14px;color:#555;font-weight:normal;">0</div>
<div style="position:absolute;left:1021px;top:538px;width:48px;height:62px;background:#5ad65e"></div>
<div style="position:absolute;left:1020px;top:538px;width:1px;height:62px;background:#e1e4e9"></div>
<div style="position:absolute;left:1019px;top:538px;width:1px;height:62px;background:#e1e4e9"></div>
<div class="t" style="left:845px;width:400px;text-align:center;top:563.15px;font-size:14px;line-height:14px;color:#555;font-weight:normal;">10</div>
<div style="position:absolute;left:1071px;top:538px;width:48px;height:62px;background:#fff"></div>
<div style="position:absolute;left:1070px;top:538px;width:1px;height:62px;background:#e1e4e9"></div>
<div style="position:absolute;left:1069px;top:538px;width:1px;height:62px;background:#e1e4e9"></div>
<div class="t" style="left:895px;width:400px;text-align:center;top:563.15px;font-size:14px;line-height:14px;color:#555;font-weight:normal;">0</div>
<div style="position:absolute;left:1121px;top:538px;width:48px;height:62px;background:#999999"></div>
<div style="position:absolute;left:1120px;top:538px;width:1px;height:62px;background:#e1e4e9"></div>
<div style="position:absolute;left:1119px;top:538px;width:1px;height:62px;background:#e1e4e9"></div>
<div class="t" style="left:945px;width:400px;text-align:center;top:563.15px;font-size:14px;line-height:14px;color:#555;font-weight:normal;">0</div>
<div style="position:absolute;left:1171px;top:538px;width:48px;height:62px;background:#5ad65e"></div>
<div style="position:absolute;left:1170px;top:538px;width:1px;height:62px;background:#e1e4e9"></div>
<div style="position:absolute;left:1169px;top:538px;width:1px;height:62px;background:#e1e4e9"></div>
<div class="t" style="left:995px;width:400px;text-align:center;top:563.15px;font-size:14px;line-height:14px;color:#555;font-weight:normal;">10</div>
<div style="position:absolute;left:1221px;top:538px;width:48px;height:62px;background:#fff"></div>
<div style="position:absolute;left:1220px;top:538px;width:1px;height:62px;background:#e1e4e9"></div>
<div style="position:absolute;left:1219px;top:538px;width:1px;height:62px;background:#e1e4e9"></div>
<div class="t" style="left:1045px;width:400px;text-align:center;top:563.15px;font-size:14px;line-height:14px;color:#555;font-weight:normal;">0</div>
<div style="position:absolute;left:1271px;top:538px;width:48px;height:62px;background:#999999"></div>
<div style="position:absolute;left:1270px;top:538px;width:1px;height:62px;background:#e1e4e9"></div>
<div style="position:absolute;left:1269px;top:538px;width:1px;height:62px;background:#e1e4e9"></div>
<div class="t" style="left:1095px;width:400px;text-align:center;top:563.15px;font-size:14px;line-height:14px;color:#555;font-weight:normal;">0</div>
<div style="position:absolute;left:1321px;top:538px;width:48px;height:62px;background:#5ad65e"></div>
<div style="position:absolute;left:1320px;top:538px;width:1px;height:62px;background:#e1e4e9"></div>
<div style="position:absolute;left:1319px;top:538px;width:1px;height:62px;background:#e1e4e9"></div>
<div class="t" style="left:1145px;width:400px;text-align:center;top:563.15px;font-size:14px;line-height:14px;color:#555;font-weight:normal;">10</div>
<div style="position:absolute;left:1371px;top:538px;width:48px;height:62px;background:#fff"></div>
<div style="position:absolute;left:1370px;top:538px;width:1px;height:62px;background:#e1e4e9"></div>
<div style="position:absolute;left:1369px;top:538px;width:1px;height:62px;background:#e1e4e9"></div>
<div class="t" style="left:1195px;width:400px;text-align:center;top:563.15px;font-size:14px;line-height:14px;color:#555;font-weight:normal;">0</div>
<div style="position:absolute;left:1421px;top:538px;width:48px;height:62px;background:#999999"></div>
<div style="position:absolute;left:1420px;top:538px;width:1px;height:62px;background:#e1e4e9"></div>
<div style="position:absolute;left:1419px;top:538px;width:1px;height:62px;background:#e1e4e9"></div>
<div class="t" style="left:1245px;width:400px;text-align:center;top:563.15px;font-size:14px;line-height:14px;color:#555;font-weight:normal;">0</div>
<div style="position:absolute;left:1471px;top:538px;width:48px;height:62px;background:#5ad65e"></div>
<div style="position:absolute;left:1470px;top:538px;width:1px;height:62px;background:#e1e4e9"></div>
<div style="position:absolute;left:1469px;top:538px;width:1px;height:62px;background:#e1e4e9"></div>
<div class="t" style="left:1295px;width:400px;text-align:center;top:563.15px;font-size:14px;line-height:14px;color:#555;font-weight:normal;">10</div>
<div style="position:absolute;left:721px;top:344px;width:48px;height:2px;background:#f59a0c"></div>
</div>
<div style="position:absolute;left:1408px;top:163px;width:7px;height:456px;background:#f0f0f0"></div>
<div style="position:absolute;left:45px;top:619px;width:1363px;height:7px;background:#f0f0f0"></div>
<div style="position:absolute;left:45px;top:619px;width:688px;height:7px;background:#909090;border-radius:4px"></div>
<div style="position:absolute;left:781px;top:183px;width:498px;height:258px;background:#fff;border:1px solid #c4c7cb;border-radius:4px;box-shadow:0 1px 2px rgba(0,0,0,0.25)"></div>
<svg style="position:absolute;left:771px;top:304px" width="12" height="21" viewBox="0 0 12 21">
<path d="M11 1.5 L1.8 10.3 L11 19.2 Z" fill="#fff"/>
<path d="M10.5 2 L1.8 10.3 L10.5 18.7" fill="none" stroke="#c9ccd0" stroke-width="1"/></svg>
<div style="position:absolute;left:1075px;top:193px;width:1px;height:63px;background:#e3e6ea"></div>
<div style="position:absolute;left:782px;top:256px;width:498px;height:1px;background:#e3e6ea"></div>
<div style="position:absolute;left:782px;top:332px;width:498px;height:1px;background:#e3e6ea"></div>
<div class="t" style="left:795px;top:198.73px;font-size:14.5px;line-height:14.5px;color:#3b7df0;font-weight:normal;-webkit-text-stroke:0.45px #3b7df0;letter-spacing:0.55px;">Baby Crib</div>
<div class="t" style="left:796px;top:220.73px;font-size:14.5px;line-height:14.5px;color:#444;font-weight:normal;">CRIB</div>
<div class="t" style="left:981.5px;width:400px;text-align:center;top:198.73px;font-size:14.5px;line-height:14.5px;color:#333;font-weight:normal;-webkit-text-stroke:0.45px #333;letter-spacing:0.75px;">Total quantity</div>
<div class="t" style="left:981px;width:400px;text-align:center;top:221.03px;font-size:23px;line-height:23px;color:#2ea44f;font-weight:bold;">6</div>
<div class="t" style="left:796px;top:289.23px;font-size:14.5px;line-height:14.5px;color:#333;font-weight:normal;-webkit-text-stroke:0.5px #333;letter-spacing:0.6px;">30 Aug 2020</div>
<div style="position:absolute;left:1093px;top:271px;width:78px;height:49px;background:#8f9dab;border-radius:4px"></div>
<div style="position:absolute;left:1184px;top:271px;width:78px;height:49px;background:#8f9dab;border-radius:4px"></div>
<div class="t" style="left:932.5px;width:400px;text-align:center;top:287.19px;font-size:17.5px;line-height:17.5px;color:#fff;font-weight:bold;letter-spacing:0.4px;">15:28</div>
<div class="t" style="left:1023.5px;width:400px;text-align:center;top:287.19px;font-size:17.5px;line-height:17.5px;color:#fff;font-weight:bold;letter-spacing:0.4px;">23:59</div>
<div class="t" style="left:977.5px;width:400px;text-align:center;top:288.15px;font-size:14px;line-height:14px;color:#666;font-weight:normal;">-</div>
<div class="t" style="left:796px;top:352.73px;font-size:14.5px;line-height:14.5px;color:#333;font-weight:normal;-webkit-text-stroke:0.45px #333;letter-spacing:0.6px;">Available: 6</div>
<div class="t" style="left:1051px;top:352.73px;font-size:14.5px;line-height:14.5px;color:#333;font-weight:normal;-webkit-text-stroke:0.45px #333;letter-spacing:0.5px;">Booked: 0</div>
<div class="t" style="left:796px;top:402.73px;font-size:14.5px;line-height:14.5px;color:#333;font-weight:normal;-webkit-text-stroke:0.45px #333;letter-spacing:0.8px;">Inused: 1</div>
<div class="t" style="left:1051px;top:402.73px;font-size:14.5px;line-height:14.5px;color:#e8413c;font-weight:normal;-webkit-text-stroke:0.45px #e8413c;letter-spacing:0.5px;">Receivable: 1</div>
<svg style="position:absolute;left:766px;top:170px" width="530" height="295" viewBox="0 0 530 295">
<defs><filter id="rsh" x="-5%" y="-5%" width="110%" height="110%"><feDropShadow dx="-0.5" dy="3" stdDeviation="2.2" flood-color="#000" flood-opacity="0.42"/></filter></defs>
<rect x="11.5" y="11.5" width="506" height="270" fill="none" stroke="#fd3c3c" stroke-width="3" filter="url(#rsh)"/></svg>
<svg style="position:absolute;left:1050px;top:210px" width="125" height="40" viewBox="0 0 125 40">
<defs><filter id="sh" x="-20%" y="-40%" width="140%" height="180%"><feDropShadow dx="-1.5" dy="3" stdDeviation="2" flood-color="#000" flood-opacity="0.45"/></filter></defs>
<g filter="url(#sh)">
<path d="M9 17 L86.3 16 L86.3 6.1 L115 19.9 L86.3 35.1 L86.3 26 L9 27 A5 5 0 0 1 9 17 Z" fill="#fc4343"/>
</g></svg>
<svg style="position:absolute;left:985px;top:274px" width="108" height="40" viewBox="0 0 108 40">
<defs><filter id="sh2" x="-20%" y="-40%" width="140%" height="180%"><feDropShadow dx="-1.5" dy="3" stdDeviation="2" flood-color="#000" flood-opacity="0.45"/></filter></defs>
<g filter="url(#sh2)">
<path d="M8.8 15.1 L74.2 13.7 L74.2 4.1 L103.8 17.9 L74.2 33.7 L74.2 23.4 L8.8 24.7 A4.8 4.8 0 0 1 8.8 15.1 Z" fill="#641f8b"/>
</g></svg>
<div style="position:absolute;left:0;top:0;width:1452px;height:667px;box-sizing:border-box;border-style:solid;border-color:#000;border-width:1px;box-shadow:inset 0 0 0 1px #fff;pointer-events:none"></div>

</body></html>
